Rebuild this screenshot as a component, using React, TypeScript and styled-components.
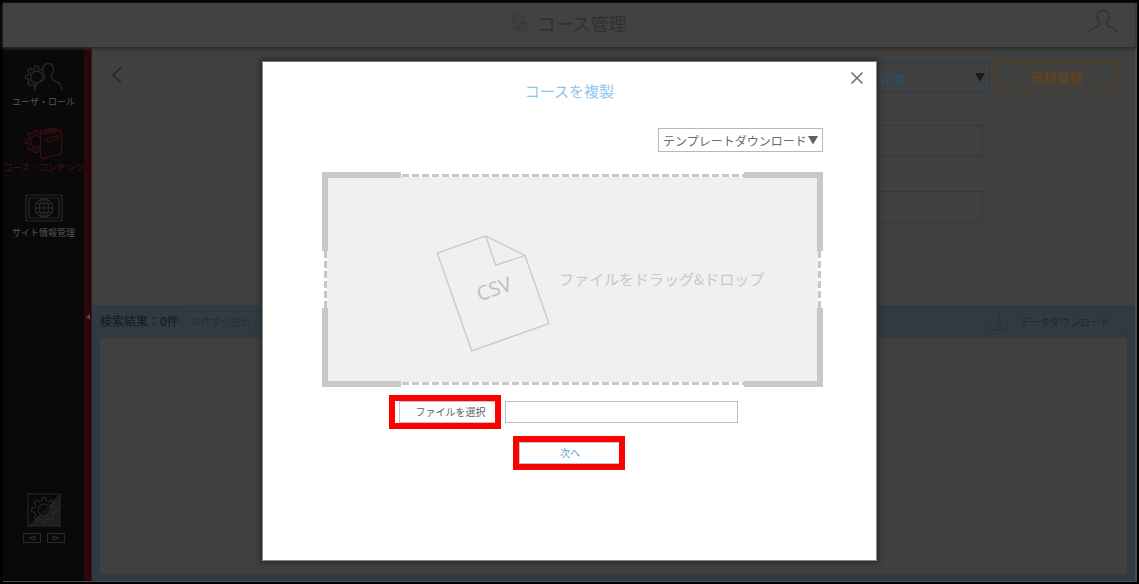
import React from "react";
import styled, { createGlobalStyle } from "styled-components";

const GlobalStyle = createGlobalStyle`
  *, *::before, *::after { box-sizing: border-box; }
  body { margin: 0; background: #000; }
  body, button, input, select {
    font-family: "Noto Sans CJK JP", "Noto Sans", sans-serif;
  }
  button, input, select { margin: 0; border-radius: 0; }
`;

const c = {
  page: "#404040",
  side: "#0a0808",
  sideLine: "#2a2a2a",
  active: "#3a0f15",
  strip: "#2b060c",
  panel: "#2f3a42",
  grey: "#c8c8c8",
  blue: "#1f3f58",
  orange: "#5f3f1c",
};

const Frame = styled.div`
  display: flex;
  flex-direction: column;
  min-height: 100vh;
  border: solid #000;
  border-width: 3px 2px 2px 3px;
  padding: 0 2px 1px 0;
  background: #4d4d4d;
`;

const Header = styled.header`
  position: relative;
  display: flex;
  align-items: center;
  justify-content: center;
  height: 44px;
  padding-bottom: 4px;
  background: #424242;
  box-shadow: 0 1px 3px 1px #2c2c2c;
`;

const PageTitle = styled.h1`
  display: flex;
  align-items: center;
  gap: 8px;
  margin: 0;
  font-size: 18px;
  line-height: 24px;
  font-weight: 400;
  color: #303030;
`;

const Account = styled.button`
  position: absolute;
  right: 16px;
  top: 5px;
  padding: 0;
  border: 0;
  background: none;
  line-height: 0;
`;

const Body = styled.div`
  display: flex;
  flex: 1;
`;

const Sidebar = styled.nav`
  display: flex;
  flex-direction: column;
  justify-content: space-between;
  flex: none;
  width: 81px;
  padding: 14px 0 38px;
  background: ${c.side};
`;

const Menu = styled.div`
  display: flex;
  flex-direction: column;
`;

const MenuLink = styled.a<{ $active?: boolean }>`
  display: flex;
  flex-direction: column;
  align-items: center;
  height: 66px;
  font-size: 9px;
  line-height: 14px;
  white-space: nowrap;
  text-decoration: none;
  color: ${(p) => (p.$active ? "#4a141c" : "#585858")};
`;

const SideTools = styled.div`
  display: flex;
  flex-direction: column;
  align-items: center;
  gap: 6px;
`;

const Pager = styled.div`
  display: flex;
  gap: 6px;
`;

const PagerButton = styled.button`
  display: flex;
  align-items: center;
  justify-content: center;
  width: 18px;
  height: 10px;
  padding: 0;
  border: 1px solid #2b2b2b;
  background: none;
`;

const Strip = styled.button`
  flex: none;
  width: 8px;
  padding: 0;
  border: 0;
  border-right: 1px solid #33181c;
  background: ${c.strip};
`;

const Main = styled.main`
  display: flex;
  flex-direction: column;
  flex: 1;
  min-width: 0;
  background: ${c.page};
`;

const Toolbar = styled.div`
  display: flex;
  gap: 4px;
  padding: 15px 16px 0 18px;
`;

const Back = styled.button`
  margin-right: auto;
  padding: 0;
  border: 0;
  background: none;
  line-height: 0;
  height: 26px;
`;

const SelectWrap = styled.div`
  position: relative;
  display: flex;
`;

const Arrow = styled.svg`
  position: absolute;
  right: 4px;
  top: 50%;
  transform: translateY(-50%);
  pointer-events: none;
`;

const BatchSelect = styled.select`
  appearance: none;
  width: 180px;
  height: 30px;
  padding: 2px 0 0 54px;
  border: 1px solid ${c.blue};
  background: ${c.page};
  color: #24506e;
  font-size: 10px;
  font-weight: 500;
`;

const NewButton = styled.button`
  width: 125px;
  height: 30px;
  padding: 0 0 2px;
  border: 1px solid ${c.orange};
  background: ${c.page};
  color: #6b4319;
  font-size: 13px;
  font-weight: 500;
`;

const Filters = styled.form`
  display: flex;
  flex-direction: column;
  align-items: flex-end;
  gap: 34px;
  padding: 33px 152px 82px 0;
`;

const FilterInput = styled.input`
  width: 60%;
  height: 32px;
  border: 1px solid #373737;
  background: ${c.page};
`;

const Results = styled.section`
  display: flex;
  flex-direction: column;
  flex: 1;
  padding: 0 8px 7px;
  background: ${c.panel};
`;

const ResultsBar = styled.div`
  display: flex;
  align-items: center;
  gap: 3px;
  height: 33px;
`;

const Count = styled.p`
  margin: 0;
  padding-bottom: 2px;
  font-size: 12px;
  line-height: 18px;
  color: #15191c;
`;

const PageSize = styled.select`
  appearance: none;
  width: 92px;
  height: 22px;
  padding: 0 0 0 7px;
  border: 1px solid #2d373e;
  background: #303b42;
  color: #273036;
  font-size: 10px;
`;

const Download = styled.button`
  display: flex;
  align-items: center;
  gap: 12px;
  width: 147px;
  height: 24px;
  margin-left: auto;
  padding: 0 9px;
  border: 1px solid #2d393f;
  background: #303b40;
  color: #20272b;
  font-size: 10px;
`;

const ResultsBody = styled.div`
  flex: 1;
  background: ${c.page};
`;

const Overlay = styled.div`
  position: absolute;
  inset: 0;
  display: flex;
  align-items: flex-start;
  justify-content: center;
  padding-top: 61px;
`;

const Dialog = styled.section`
  position: relative;
  width: 54%;
  min-width: 560px;
  min-height: 500px;
  padding: 18px 0;
  border: 1px solid #8a8a8a;
  border-top-color: #777;
  background: #fff;
  box-shadow: 0 0 5px 2px #2b2b2b;
`;

const Close = styled.button`
  position: absolute;
  right: 12px;
  top: 9px;
  padding: 0;
  border: 0;
  background: none;
  line-height: 0;
`;

const DialogTitle = styled.h2`
  margin: 0 0 26px;
  font-size: 15px;
  line-height: 22px;
  font-weight: 400;
  text-align: center;
  color: #8cc6ee;
`;

const DialogBody = styled.div`
  display: flex;
  flex-direction: column;
  padding: 0 53px 0 59px;
`;

const TemplateWrap = styled(SelectWrap)`
  align-self: flex-end;
  margin-bottom: 20px;
`;

const TemplateSelect = styled.select`
  appearance: none;
  width: 165px;
  height: 24px;
  padding: 0 0 0 4px;
  border: 1px solid #b8b8b8;
  background: #fff;
  color: #6a6a6a;
  font-size: 12px;
`;

const solid = `linear-gradient(${c.grey}, ${c.grey})`;
const dashX = `repeating-linear-gradient(90deg, transparent 0 1px, ${c.grey} 1px 8px, transparent 8px 10px)`;
const dashY = `repeating-linear-gradient(180deg, ${c.grey} 0 7px, transparent 7px 10px)`;

const DropZone = styled.div`
  display: flex;
  align-items: center;
  gap: 9px;
  height: 215px;
  padding-left: 114px;
  color: ${c.grey};
  font-size: 15px;
  line-height: 22px;
  background:
    ${solid} left top / 79px 6px,
    ${solid} left top / 6px 79px,
    ${solid} right top / 79px 6px,
    ${solid} right top / 6px 79px,
    ${solid} left bottom / 79px 6px,
    ${solid} left bottom / 6px 79px,
    ${solid} right bottom / 79px 6px,
    ${solid} right bottom / 6px 79px,
    ${dashX} center top 2px / calc(100% - 158px) 3px,
    ${dashX} center bottom 2px / calc(100% - 158px) 3px,
    ${dashY} left 2px center / 3px calc(100% - 158px),
    ${dashY} right 2px center / 3px calc(100% - 158px),
    linear-gradient(#f0f0f0, #f0f0f0) center / calc(100% - 10px) calc(100% - 10px);
  background-repeat: no-repeat;
`;

const CsvIcon = styled.svg`
  flex: none;
  margin-top: 28px;
`;

const DropText = styled.span`
  padding-bottom: 2px;
`;

const FileRow = styled.div`
  display: flex;
  align-items: center;
  justify-content: center;
  gap: 4px;
  margin: 8px 18px 7px 0;
`;

const Highlight = styled.div<{ $inset?: boolean }>`
  display: flex;
  width: 112px;
  height: 34px;
  padding-left: ${(p) => (p.$inset ? "4px" : "0")};
  border: 6px solid #f00;
  background: #fff;
`;

const NextRow = styled.div`
  display: flex;
  justify-content: center;
`;

const PlainButton = styled.button<{ $blue?: boolean }>`
  flex: 1;
  padding: ${(p) => (p.$blue ? "0" : "0 0 0 6px")};
  border: 1px solid ${(p) => (p.$blue ? "#a9cbe8" : "#c4c4c4")};
  border-right: 0;
  background: #fff;
  color: ${(p) => (p.$blue ? "#5b9bd0" : "#606060")};
  font-size: 10px;
  line-height: 14px;
`;

const FileName = styled.input`
  width: 233px;
  height: 22px;
  border: 1px solid #bdbdbd;
  background: #fff;
`;

function gear(cx: number, cy: number, r: number, depth: number, teeth = 8) {
  const step = (Math.PI * 2) / teeth;
  const at = (rad: number, a: number) =>
    `${(cx + rad * Math.cos(a)).toFixed(2)} ${(cy + rad * Math.sin(a)).toFixed(2)}`;
  let d = "";
  for (let i = 0; i < teeth; i++) {
    const a = i * step - Math.PI / 2;
    d += `${i ? "L" : "M"}${at(r, a - step * 0.2)}L${at(r, a + step * 0.2)}`;
    d += `L${at(r - depth, a + step * 0.28)}A${r - depth} ${r - depth} 0 0 1 ${at(r - depth, a + step * 0.72)}`;
  }
  return d + "Z";
}

const UserRoleIcon = () => (
  <svg width="38" height="34" viewBox="0 -1 38 34" fill="none" stroke={c.sideLine} strokeWidth="1.300">
    <path d={gear(11.5, 15, 11, 2.6)} />
    <circle cx="11.5" cy="15" r="6" />
    <path
      fill={c.side}
      d="M9.5 28.500c.6-6 2.500-8 6-9.200 3-1 4.500-2 4.500-5-1.500-1.500-2-3.500-2-5C17.200 4 19.500 1.500 23.200 1.500S29 4 28.200 9.300c0 1.500-.6 3.500-2 5 0 3 1.500 4 4.500 5 4 1.200 6 3.700 6.300 9.200"
    />
  </svg>
);

const CourseIcon = () => (
  <svg width="38" height="34" viewBox="0 0 38 34" fill="none" stroke={c.active} strokeWidth="1.200">
    <path d={gear(11.5, 14.500, 11, 2.6)} />
    <circle cx="11.5" cy="14.500" r="6" />
    <path fill={c.side} d="M15.500 4L29 .8 36.500 4v22.500L17.500 31.500l-2-2.500z" />
    <path d="M15.500 4l2.500 2.500L36.500 4M17 3.500l14-1.500M19 5l14-2M22 11.500l11-3v3.500l-11 3.300z" />
  </svg>
);

const GlobeIcon = () => (
  <svg width="38" height="33" viewBox="0 -1 38 33" fill="none" stroke={c.sideLine} strokeWidth="1.200">
    <path d="M1 1h36v26H1zM4 4h30v20h-30z" />
    <circle cx="19" cy="14" r="9" />
    <ellipse cx="19" cy="14" rx="4.500" ry="9" />
    <path d="M19 5v18M10 14h18M11.500 9.500h15M11.500 18.500h15" />
  </svg>
);

const ThemeIcon = () => (
  <svg width="34" height="34" viewBox="0 0 34 34" fill="none" stroke="#2b2b2b">
    <path fill="#1e1e1e" stroke="none" d="M33 1v32H1z" />
    <rect x="1" y="1" width="32" height="32" />
    <path stroke="#303030" d={gear(17, 17, 12.5, 3)} />
    <circle stroke="#303030" cx="17" cy="17" r="6" />
    <path fill="#121212" stroke="none" d="M21.200 12.800A6 6 0 0 1 12.800 21.200z" />
  </svg>
);

const DownArrow = ({ color }: { color: string }) => (
  <Arrow width="12" height="10" viewBox="0 0 12 10" aria-hidden>
    <path d="M1 1h10L6 9.500z" fill={color} />
  </Arrow>
);

export default function App() {
  return (
    <>
      <GlobalStyle />
      <Frame>
        <Header>
          <PageTitle>
            <svg width="18" height="22" viewBox="0 0 18 22" fill="none" stroke="#363636">
              <path d="M2 5l7-3 3 2v6M2 5v11l3 2 4-1M2 5l3 2 7-3M5 7v11M7 9l3-1" />
              <path d={gear(12.500, 15, 5, 1.3)} />
              <circle cx="12.500" cy="15" r="1.500" />
            </svg>
            コース管理
          </PageTitle>
          <Account aria-label="アカウント">
            <svg width="32" height="26" viewBox="0 0 32 26" fill="none" stroke="#303030" strokeWidth="1.300">
              <path d="M2 25c.5-4 4-5 8-6.300 2.500-.8 3-2 2.500-4C10.500 12.500 10 10 10.300 7 10.500 4 12.500 2.600 16 2.600S21.500 4 21.700 7c.3 3-.2 5.500-2.200 7.700-.5 2 0 3.200 2.500 4C26 20 29.500 21 30 25" />
            </svg>
          </Account>
        </Header>
        <Body>
          <Sidebar>
            <Menu>
              <MenuLink href="#users">
                <UserRoleIcon />
                <span>ユーザ・ロール</span>
              </MenuLink>
              <MenuLink href="#courses" $active>
                <CourseIcon />
                <span>コース・コンテンツ</span>
              </MenuLink>
              <MenuLink href="#site">
                <GlobeIcon />
                <span>サイト情報管理</span>
              </MenuLink>
            </Menu>
            <SideTools>
              <ThemeIcon />
              <Pager>
                <PagerButton aria-label="前へ">
                  <svg width="8" height="6" viewBox="0 0 8 6" fill="none" stroke="#303030">
                    <path d="M7 .8v4.400L1 3z" />
                  </svg>
                </PagerButton>
                <PagerButton aria-label="次のページ">
                  <svg width="8" height="6" viewBox="0 0 8 6" fill="none" stroke="#303030">
                    <path d="M1 .8v4.400L7 3z" />
                  </svg>
                </PagerButton>
              </Pager>
            </SideTools>
          </Sidebar>
          <Strip aria-label="メニューを閉じる">
            <svg width="4" height="6" viewBox="0 0 4 6">
              <path d="M4 0v6L0 3z" fill="#4a4a4a" />
            </svg>
          </Strip>
          <Main>
            <Toolbar>
              <Back aria-label="戻る">
                <svg width="14" height="26" viewBox="0 0 14 26" fill="none" stroke="#262626" strokeWidth="1.500">
                  <path d="M11 5.500L3 13l8 7.500" />
                </svg>
              </Back>
              <SelectWrap>
                <BatchSelect aria-label="一括処理">
                  <option>一括処理</option>
                </BatchSelect>
                <DownArrow color="#1a1a1a" />
              </SelectWrap>
              <NewButton>新規登録</NewButton>
            </Toolbar>
            <Filters>
              <FilterInput aria-label="コース名" />
              <FilterInput aria-label="コースコード" />
            </Filters>
            <Results>
              <ResultsBar>
                <Count>検索結果：0件</Count>
                <SelectWrap>
                  <PageSize aria-label="表示件数">
                    <option>10件ずつ表示</option>
                  </PageSize>
                </SelectWrap>
                <Download>
                  <svg width="18" height="18" viewBox="0 0 18 18" fill="none" stroke="#273035">
                    <path d="M9 1v12M6 10l3 3 3-3M1 11v6h16v-6" />
                  </svg>
                  データダウンロード
                </Download>
              </ResultsBar>
              <ResultsBody />
            </Results>
          </Main>
        </Body>
      </Frame>
      <Overlay>
        <Dialog role="dialog" aria-labelledby="dialog-title">
          <Close aria-label="閉じる">
            <svg width="14" height="14" viewBox="0 0 14 14" fill="none" stroke="#707070" strokeWidth="1.600">
              <path d="M1.500 1.500l11 11M12.500 1.500l-11 11" />
            </svg>
          </Close>
          <DialogTitle id="dialog-title">コースを複製</DialogTitle>
          <DialogBody>
            <TemplateWrap>
              <TemplateSelect aria-label="テンプレートダウンロード">
                <option>テンプレートダウンロード</option>
              </TemplateSelect>
              <DownArrow color="#606060" />
            </TemplateWrap>
            <DropZone>
              <CsvIcon width="114" height="117" viewBox="0 0 114 117" fill="none" stroke={c.grey} strokeWidth="1.300">
                <path d="M1.300 18.200L49.700 1 89 20.500 113 88.500 35.700 115.800zM49.700 1l10 29.200L89 20.500" />
                <text
                  x="0"
                  y="7"
                  textAnchor="middle"
                  transform="translate(58 54) rotate(-19)"
                  fontFamily="Noto Sans"
                  fontSize="20"
                  fill="#c0c0c0"
                  stroke="none"
                >
                  CSV
                </text>
              </CsvIcon>
              <DropText>ファイルをドラッグ&amp;ドロップ</DropText>
            </DropZone>
            <FileRow>
              <Highlight $inset>
                <PlainButton>ファイルを選択</PlainButton>
              </Highlight>
              <FileName aria-label="選択したファイル" readOnly />
            </FileRow>
          </DialogBody>
          <NextRow>
            <Highlight>
              <PlainButton $blue>次へ</PlainButton>
            </Highlight>
          </NextRow>
        </Dialog>
      </Overlay>
    </>
  );
}
